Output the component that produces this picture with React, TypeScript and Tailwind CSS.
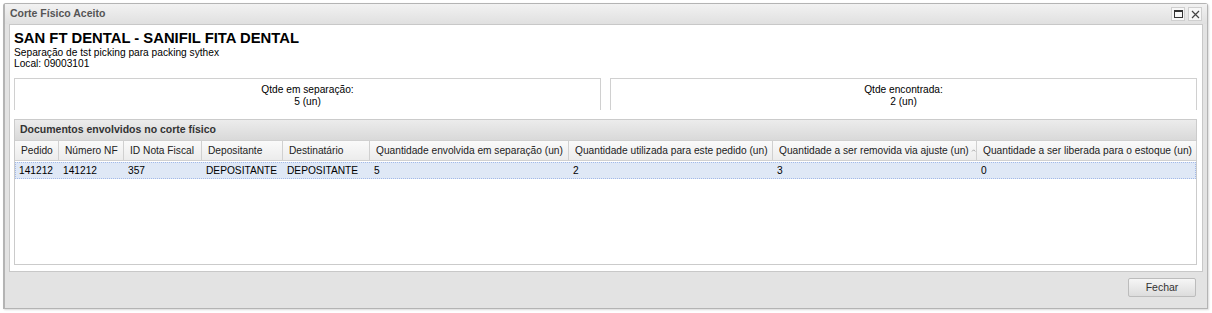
import { ChevronUp } from 'lucide-react'

const cols = [
  { label: 'Pedido', w: 'w-[44px]', value: '141212' },
  { label: 'Número NF', w: 'w-[65px]', value: '141212' },
  { label: 'ID Nota Fiscal', w: 'w-[78px]', value: '357' },
  { label: 'Depositante', w: 'w-[81px]', value: 'DEPOSITANTE' },
  { label: 'Destinatário', w: 'w-[87px]', value: 'DEPOSITANTE' },
  { label: 'Quantidade envolvida em separação (un)', w: 'w-[199px]', value: '5' },
  { label: 'Quantidade utilizada para este pedido (un)', w: 'w-[204px]', value: '2' },
  { label: 'Quantidade a ser removida via ajuste (un)', w: 'w-[204px]', value: '3', sorted: true },
  { label: 'Quantidade a ser liberada para o estoque (un)', w: 'w-[220px]', value: '0' },
]

function QtyBox({ label, value }: { label: string; value: string }) {
  return (
    <div className="flex-1 h-[32px] border-t border-x border-[#d0d0d0] flex flex-col items-center pt-[5px] leading-[12px] text-[10.2px]">
      <span>{label}</span>
      <span>{value}</span>
    </div>
  )
}

export default function App() {
  return (
    <div className="w-[1212px] h-[313px] bg-white pt-[3px] pl-[3px] font-['Liberation_Sans',Arial,sans-serif] text-black">
      {/* janela */}
      <div className="w-[1205px] h-[306px] border border-[#b4b4b4] border-l-[2px] rounded-t-[3px] bg-[#e3e3e3] shadow-[1px_1px_2px_rgba(0,0,0,0.15)] flex flex-col">
        {/* barra de título */}
        <div className="h-[20px] flex items-center pl-[5px] pr-[5px] bg-gradient-to-b from-[#f2f2f2] to-[#e0e0e0]">
          <span className="text-[10.5px] font-bold text-[#555]">Corte Físico Aceito</span>
          <div className="ml-auto flex gap-[3px]">
            <button className="w-[14px] h-[14px] border border-[#cfcfcf] bg-[#f7f7f7] flex items-center justify-center">
              <span className="block w-[9px] h-[8px] border border-[#333] border-t-[2px]" />
            </button>
            <button className="w-[14px] h-[14px] border border-[#cfcfcf] bg-[#f7f7f7] flex items-center justify-center">
              <svg width="9" height="9" viewBox="0 0 9 9">
                <path d="M1 1 L8 8 M8 1 L1 8" stroke="#444" strokeWidth="1.2" />
              </svg>
            </button>
          </div>
        </div>

        {/* corpo */}
        <div className="mx-[4px] h-[248px] border border-[#c8c8c8] bg-white pl-[4px] pr-[5px] pt-[5px] flex flex-col">
          <div className="text-[14.8px] font-bold leading-[17px]">SAN FT DENTAL - SANIFIL FITA DENTAL</div>
          <div className="text-[10.2px] leading-[11px]">Separação de tst picking para packing sythex</div>
          <div className="text-[10.2px] leading-[11px]">Local: 09003101</div>

          <div className="mt-[9px] flex gap-[9px]">
            <QtyBox label="Qtde em separação:" value="5 (un)" />
            <QtyBox label="Qtde encontrada:" value="2 (un)" />
          </div>

          {/* grid */}
          <div className="mt-[9px] h-[146px] border border-[#cbcbcb] flex flex-col">
            <div className="h-[21px] flex items-center pl-[5px] bg-gradient-to-b from-[#ececec] to-[#d9d9d9] border-b border-[#d0d0d0]">
              <span className="text-[10.5px] font-bold text-[#333]">Documentos envolvidos no corte físico</span>
            </div>
            <div className="flex h-[20px] bg-gradient-to-b from-[#fafafa] to-[#ececec] border-b border-[#d0d0d0]">
              {cols.map((c) => (
                <div key={c.label} className={`${c.w} shrink-0 flex items-center pl-[6px] border-r border-[#d0d0d0] text-[10.2px] text-[#222] whitespace-nowrap overflow-hidden`}>
                  <span>{c.label}</span>
                  {c.sorted && <ChevronUp size={7} strokeWidth={4} className="ml-[2px] text-[#999]" />}
                </div>
              ))}
            </div>
            <div className="mt-[1px] flex h-[17px] bg-[#dfe8f6] border border-dotted border-[#a3bae9]">
              {cols.map((c) => (
                <div key={c.label} className={`${c.w} shrink-0 flex items-center pl-[3px] text-[10.2px] whitespace-nowrap`}>
                  {c.value}
                </div>
              ))}
            </div>
            <div className="flex-1" />
          </div>
        </div>

        {/* rodapé */}
        <div className="flex-1 flex items-start justify-end pr-[11px] pt-[6px]">
          <button className="w-[68px] h-[19px] rounded-[2px] border border-[#bcbcbc] bg-gradient-to-b from-[#f6f6f6] to-[#dcdcdc] text-[10.5px] text-[#333]">
            Fechar
          </button>
        </div>
      </div>
    </div>
  )
}
